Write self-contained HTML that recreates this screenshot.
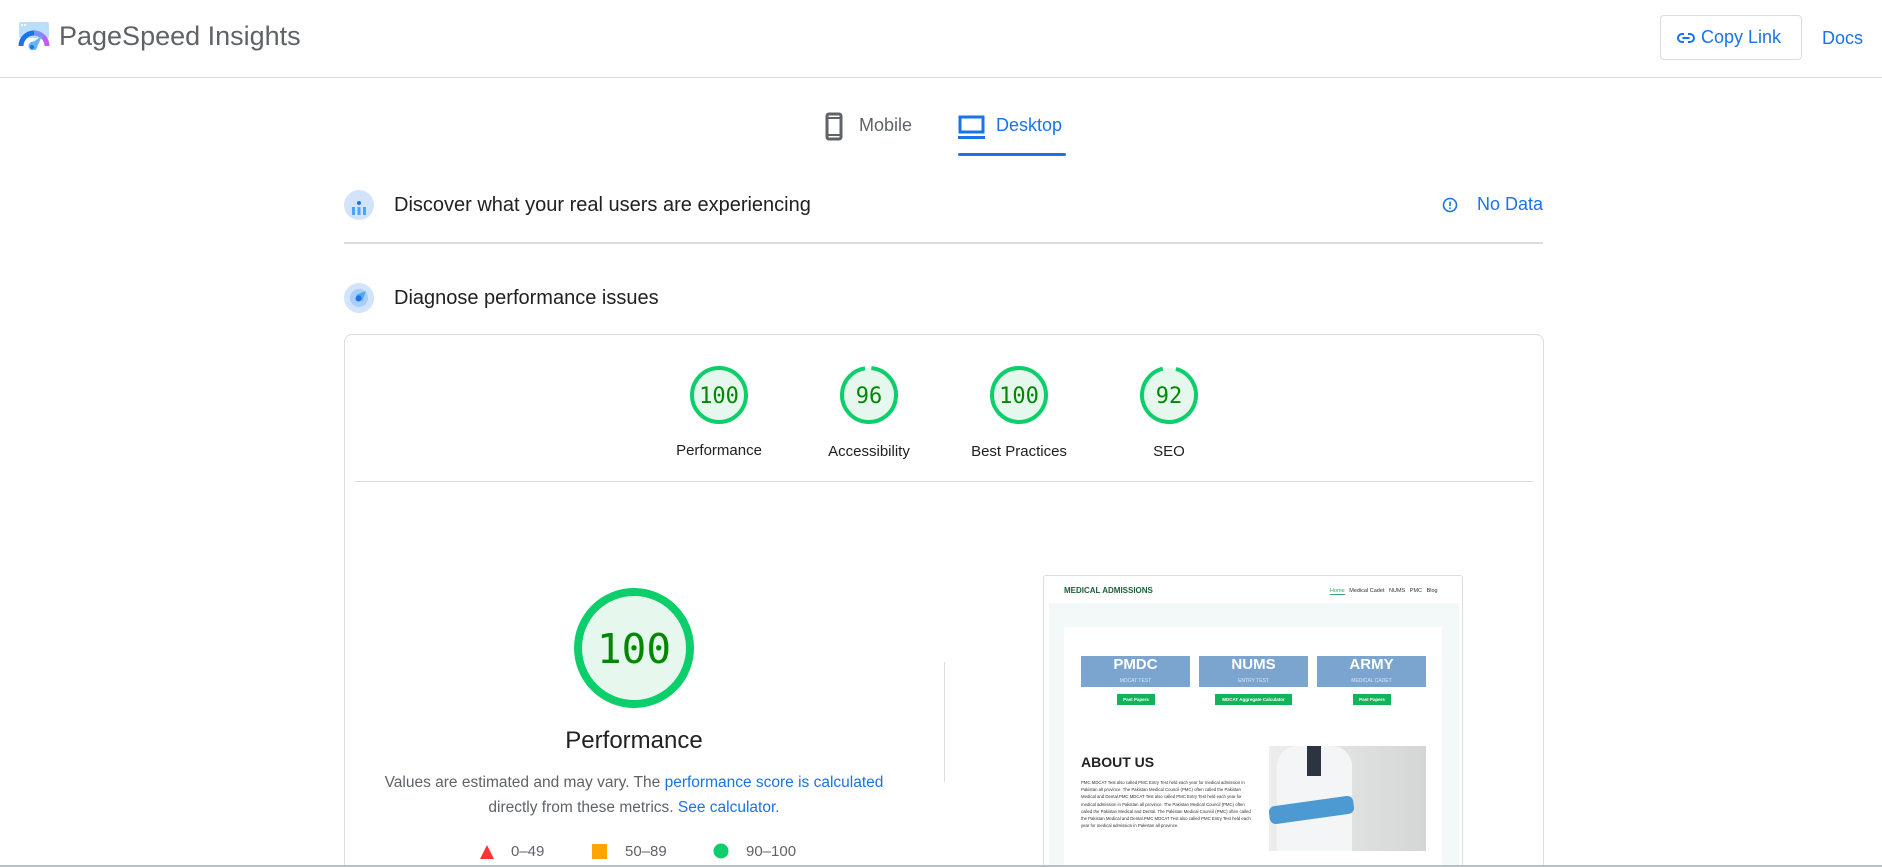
<!DOCTYPE html>
<html style="overflow:hidden;width:1882px;height:867px"><head><meta charset="utf-8"><style>
*{margin:0;padding:0;box-sizing:border-box}
body{width:1882px;height:867px;overflow:hidden;background:#fff;font-family:"Liberation Sans",sans-serif;color:#202124;position:relative}
.a{position:absolute;white-space:nowrap}
.blue{color:#1a73e8}
.gl{position:absolute;text-align:center;font-size:15px;color:#202124}
.num{font-family:"DejaVu Sans Mono","Liberation Mono",monospace;fill:#008800}
</style></head><body>
<svg class="a" style="left:18px;top:21px" width="32" height="29" viewBox="0 0 32 29">
<rect x="1" y="1" width="30" height="16" rx="2" fill="#bbdefb"/>
<circle cx="4" cy="4" r="1" fill="#fff"/><circle cx="7" cy="4" r="1" fill="#fff"/>
<path d="M3 25 A13 13 0 0 1 16 12" stroke="#1a73e8" stroke-width="5" fill="none"/>
<path d="M16 12 A13 13 0 0 1 29 25" stroke="#c05ef0" stroke-width="5" fill="none"/>
<path d="M16 12 A13 13 0 0 1 25 16" stroke="#7c8ef8" stroke-width="5" fill="none"/>
<circle cx="15" cy="25" r="4.5" fill="#64b5f6"/><path d="M15 21 L24 15 L19 26Z" fill="#64b5f6"/><circle cx="14" cy="26" r="2" fill="#1a73e8"/>
</svg>
<div class="a" style="left:59px;top:21px;font-size:27px;color:#5f6368">PageSpeed Insights</div>
<div class="a" style="left:1660px;top:15px;width:142px;height:45px;border:1px solid #dadce0;border-radius:4px"></div>
<svg class="a" style="left:1677px;top:31px" width="18" height="14" viewBox="0 0 18 14"><path d="M7 3H5a4 4 0 0 0 0 8h2M11 3h2a4 4 0 0 1 0 8h-2M5.5 7h7" stroke="#1a73e8" stroke-width="2" fill="none"/></svg>
<div class="a blue" style="left:1701px;top:27px;font-size:18px">Copy Link</div>
<div class="a blue" style="left:1822px;top:28px;font-size:18px">Docs</div>
<div class="a" style="left:0;top:77px;width:1882px;height:1px;background:#dadce0"></div>
<svg class="a" style="left:825px;top:112px" width="18" height="29" viewBox="0 0 18 29"><rect x="2" y="2" width="14" height="25" rx="2" stroke="#5f6368" stroke-width="3" fill="none"/><path d="M2 6h14M2 23h14" stroke="#5f6368" stroke-width="2"/></svg>
<div class="a" style="left:859px;top:115px;font-size:18px;color:#5f6368">Mobile</div>
<svg class="a" style="left:958px;top:115px" width="27" height="24" viewBox="0 0 27 24"><rect x="2" y="2" width="23" height="15" stroke="#1a73e8" stroke-width="3" fill="none"/><path d="M0 22.5h27" stroke="#1a73e8" stroke-width="3"/></svg>
<div class="a blue" style="left:996px;top:115px;font-size:18px">Desktop</div>
<div class="a" style="left:958px;top:153px;width:108px;height:3px;background:#1a73e8;border-radius:2px"></div>
<svg class="a" style="left:344px;top:190px" width="30" height="30" viewBox="0 0 30 30"><circle cx="15" cy="15" r="15" fill="#d2e3fc"/><circle cx="15" cy="13" r="2" fill="#1a73e8"/><rect x="8" y="17" width="3" height="8" fill="#4da3f5"/><rect x="13.5" y="17" width="3" height="8" fill="#4da3f5"/><rect x="19" y="17" width="3" height="8" fill="#4da3f5"/></svg>
<div class="a" style="left:394px;top:194px;font-size:20px">Discover what your real users are experiencing</div>
<svg class="a" style="left:1442px;top:197px" width="16" height="16" viewBox="0 0 16 16"><circle cx="8" cy="8" r="6.5" stroke="#1a73e8" stroke-width="1.6" fill="none"/><path d="M8 4.5v4.5" stroke="#1a73e8" stroke-width="1.6"/><circle cx="8" cy="11.2" r="0.9" fill="#1a73e8"/></svg>
<div class="a blue" style="left:1477px;top:194px;font-size:18px">No Data</div>
<div class="a" style="left:344px;top:242px;width:1199px;height:2px;background:#dadce0"></div>
<svg class="a" style="left:344px;top:283px" width="30" height="30" viewBox="0 0 30 30"><circle cx="15" cy="15" r="15" fill="#d2e3fc"/><circle cx="15" cy="15" r="9" fill="#a8cdf8"/><path d="M12 12 L22 8 L18 18Z" fill="#4da3f5"/><circle cx="14.5" cy="15.5" r="3" fill="#1a73e8"/></svg>
<div class="a" style="left:394px;top:287px;font-size:20px">Diagnose performance issues</div>
<div class="a" style="left:344px;top:334px;width:1200px;height:533px;border:1px solid #dadce0;border-bottom:none;border-radius:8px 8px 0 0"></div>
<svg class="a" style="left:0;top:0" width="1882" height="867">
<g fill="#e6f8ee" stroke="#0cce6b" stroke-width="4">
<circle cx="719" cy="395" r="27"/>
<circle cx="1019" cy="395" r="27"/>
</g>
<circle cx="869" cy="395" r="27" fill="#e6f8ee" stroke="#0cce6b" stroke-width="4" stroke-dasharray="163 7" transform="rotate(-85 869 395)"/>
<circle cx="1169" cy="395" r="27" fill="#e6f8ee" stroke="#0cce6b" stroke-width="4" stroke-dasharray="156 14" transform="rotate(-75 1169 395)"/>
<g class="num" font-size="22" text-anchor="middle">
<text x="719" y="403">100</text><text x="869" y="403">96</text><text x="1019" y="403">100</text><text x="1169" y="403">92</text>
</g>
<circle cx="634" cy="648" r="56" fill="#e6f8ee" stroke="#0cce6b" stroke-width="8"/>
<text class="num" x="634" y="663" font-size="41" text-anchor="middle">100</text>
<path d="M480 859 L487 845 L494 859Z" fill="#ff3333"/>
<rect x="592" y="844" width="15" height="15" fill="#ffa400"/>
<circle cx="721" cy="851" r="7.5" fill="#0cce6b"/>
</svg>
<div class="gl" style="left:659px;top:442px;width:120px">Performance</div>
<div class="gl" style="left:809px;top:443px;width:120px">Accessibility</div>
<div class="gl" style="left:949px;top:443px;width:140px">Best Practices</div>
<div class="gl" style="left:1109px;top:443px;width:120px">SEO</div>
<div class="a" style="left:355px;top:481px;width:1178px;height:1px;background:#dadce0"></div>
<div class="a" style="left:534px;top:727px;width:200px;text-align:center;font-size:24px">Performance</div>
<div class="a" style="left:380px;top:770px;width:508px;text-align:center;font-size:15.5px;color:#5f6368;line-height:25px;white-space:normal">Values are estimated and may vary. The <span class="blue">performance score is calculated</span><br>directly from these metrics. <span class="blue">See calculator.</span></div>
<div class="a" style="left:511px;top:843px;font-size:15px;color:#5f6368">0–49</div>
<div class="a" style="left:625px;top:843px;font-size:15px;color:#5f6368">50–89</div>
<div class="a" style="left:746px;top:843px;font-size:15px;color:#5f6368">90–100</div>
<div class="a" style="left:944px;top:662px;width:1px;height:120px;background:#dadce0"></div>
<div class="a" style="left:1043px;top:575px;width:420px;height:300px;border:1px solid #dadce0;border-radius:3px;overflow:hidden;background:#fff">
 <div class="a" style="left:20px;top:10px;font-size:8px;font-weight:bold;color:#1d5e3a">MEDICAL ADMISSIONS</div>
 <div class="a" style="left:286px;top:12px;font-size:5.5px;color:#333"><span style="color:#2fae6b;border-bottom:1px solid #2fae6b">Home</span>&nbsp;&nbsp; Medical Cadet&nbsp;&nbsp; NUMS&nbsp;&nbsp; PMC&nbsp;&nbsp; Blog</div>
 <div class="a" style="left:5px;top:27px;width:410px;height:280px;background:#f3f8f8"></div>
 <div class="a" style="left:20px;top:51px;width:378px;height:260px;background:#fff"></div>
 <div class="a" style="left:37px;top:80px;width:109px;height:31px;background:#7ba4cf;color:#fff;text-align:center;font-weight:bold;font-size:15px;line-height:17px">PMDC<div style="font-size:5px;font-weight:normal;color:#dce8f5">MDCAT TEST</div></div>
 <div class="a" style="left:155px;top:80px;width:109px;height:31px;background:#7ba4cf;color:#fff;text-align:center;font-weight:bold;font-size:15px;line-height:17px">NUMS<div style="font-size:5px;font-weight:normal;color:#dce8f5">ENTRY TEST</div></div>
 <div class="a" style="left:273px;top:80px;width:109px;height:31px;background:#7ba4cf;color:#fff;text-align:center;font-weight:bold;font-size:15px;line-height:17px">ARMY<div style="font-size:5px;font-weight:normal;color:#dce8f5">MEDICAL CADET</div></div>
 <div class="a" style="left:73px;top:118px;width:38px;height:11px;background:#13b35a;color:#fff;font-size:4.5px;font-weight:bold;text-align:center;line-height:11px">Past Papers</div>
 <div class="a" style="left:171px;top:118px;width:77px;height:11px;background:#13b35a;color:#fff;font-size:4.5px;font-weight:bold;text-align:center;line-height:11px">MDCAT Aggregate Calculator</div>
 <div class="a" style="left:309px;top:118px;width:38px;height:11px;background:#13b35a;color:#fff;font-size:4.5px;font-weight:bold;text-align:center;line-height:11px">Past Papers</div>
 <div class="a" style="left:37px;top:178px;font-size:14px;font-weight:bold;color:#222">ABOUT US</div>
 <div class="a" style="left:37px;top:203px;width:170px;font-size:4.3px;line-height:7.2px;color:#333;white-space:normal">PMC MDCAT Test also called PMC Entry Test held each year for medical admission in Pakistan all province. The Pakistan Medical Council (PMC) often called the Pakistan Medical and Dental.PMC MDCAT Test also called PMC Entry Test held each year for medical admission in Pakistan all province. The Pakistan Medical Council (PMC) often called the Pakistan Medical and Dental. The Pakistan Medical Council (PMC) often called the Pakistan Medical and Dental.PMC MDCAT Test also called PMC Entry Test held each year for medical admission in Pakistan all province.</div>
 <div class="a" style="left:225px;top:170px;width:157px;height:105px;overflow:hidden;background:linear-gradient(90deg,#eceded,#d4d6d5)">
  <div class="a" style="left:8px;top:0;width:75px;height:105px;background:#f4f5f6;border-radius:20px 20px 0 0"></div>
  <div class="a" style="left:38px;top:0;width:14px;height:30px;background:#2b3440"></div>
  <div class="a" style="left:0;top:55px;width:85px;height:18px;background:#4d9ad3;border-radius:6px;transform:rotate(-8deg)"></div>
 </div>
</div>
<div class="a" style="left:0;top:865px;width:1882px;height:2px;background:#b8c0c4"></div>
</body></html>
